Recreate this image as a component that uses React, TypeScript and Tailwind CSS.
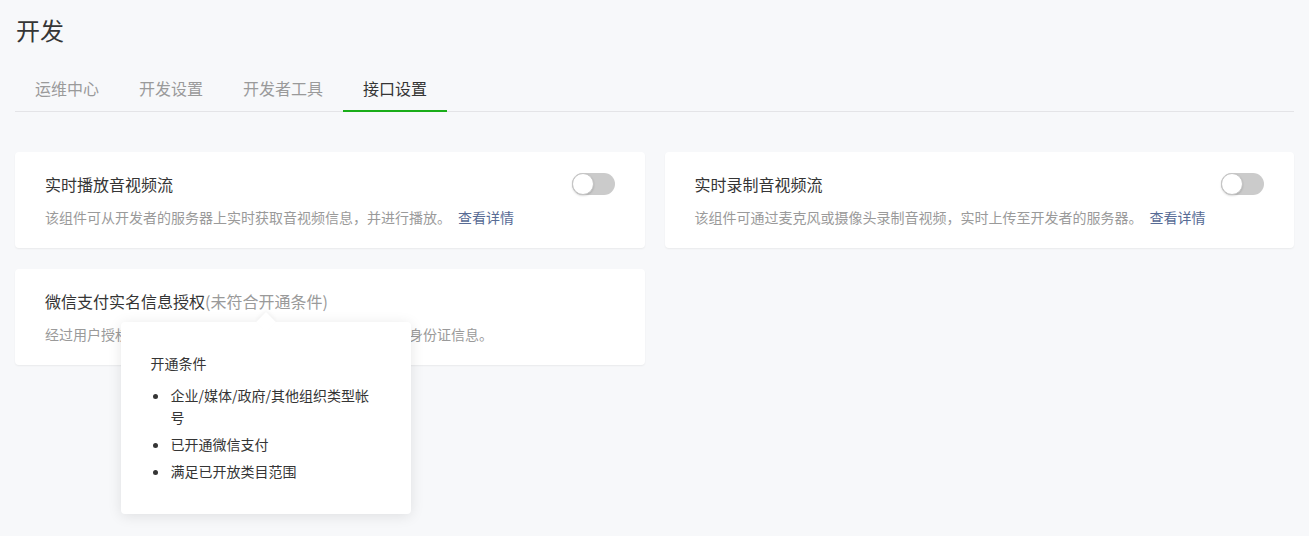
import React from 'react';

const font = { fontFamily: '"Noto Sans CJK SC", "Noto Sans", sans-serif' };

const tabs = ['运维中心', '开发设置', '开发者工具', '接口设置'];

function Toggle() {
  return (
    <div className="relative h-[22px] w-[43px] shrink-0 rounded-full bg-[#cbcbcb]">
      <div className="absolute left-0 top-0 h-[22px] w-[22px] rounded-full border border-[#c4c4c4] bg-white shadow-[0_1px_2px_rgba(0,0,0,0.15)]" />
    </div>
  );
}

function Card({ title, desc, link }: { title: string; desc: string; link: string }) {
  return (
    <div className="rounded bg-white px-[30px] py-5 shadow-[0_1px_2px_rgba(0,0,0,0.06)]">
      <div className="flex items-center justify-between">
        <h3 className="text-[16px] leading-6 text-[#353535]">{title}</h3>
        <Toggle />
      </div>
      <p className="mt-[10px] text-[14px] leading-[22px] text-[#9a9a9a]">
        {desc}
        <a className="ml-[7px] text-[#576b95]">{link}</a>
      </p>
    </div>
  );
}

export default function App() {
  return (
    <div className="min-h-[536px] bg-[#f7f8fa] px-[15px] pt-[14px]" style={font}>
      <h1 className="pl-px text-[24px] leading-8 text-[#353535]">开发</h1>

      <div className="mt-[30px] flex border-b border-[#e4e4e7]">
        {tabs.map((t, i) => (
          <div
            key={t}
            className={
              i === 3
                ? 'mb-[-1px] border-b-2 border-[#1aad19] px-5 pb-[9px] text-[16px] leading-6 text-[#353535]'
                : 'px-5 pb-[11px] text-[16px] leading-6 text-[#9a9a9a]'
            }
          >
            {t}
          </div>
        ))}
      </div>

      <div className="mt-[40px] grid grid-cols-2 gap-x-5 gap-y-[21px]">
        <Card
          title="实时播放音视频流"
          desc="该组件可从开发者的服务器上实时获取音视频信息，并进行播放。"
          link="查看详情"
        />
        <Card
          title="实时录制音视频流"
          desc="该组件可通过麦克风或摄像头录制音视频，实时上传至开发者的服务器。"
          link="查看详情"
        />
        <div className="rounded bg-white px-[30px] py-5 shadow-[0_1px_2px_rgba(0,0,0,0.06)]">
          <h3 className="text-[16px] leading-6 text-[#353535]">
            微信支付实名信息授权
            <span className="relative text-[#9a9a9a]">
              (未符合开通条件)
              <div className="absolute left-1/2 top-[calc(100%+9px)] z-10 w-[290px] -translate-x-1/2 rounded bg-white pb-[32px] pl-[29px] pr-[31px] pt-[30px] text-[14px] leading-[22px] text-[#353535] shadow-[0_2px_14px_rgba(0,0,0,0.1)]">
                <div className="absolute left-1/2 top-[-7px] h-[14px] w-[14px] -translate-x-1/2 rotate-45 bg-white shadow-[-2px_-2px_4px_rgba(0,0,0,0.04)]" />
                <p className="relative">开通条件</p>
                <ul className="relative mt-[10px] w-[228px] list-disc pl-5">
                  <li className="mb-[5px]">企业/媒体/政府/其他组织类型帐号</li>
                  <li className="mb-[5px]">已开通微信支付</li>
                  <li>满足已开放类目范围</li>
                </ul>
              </div>
            </span>
          </h3>
          <p className="mt-[10px] text-[14px] leading-[22px] text-[#9a9a9a]">
            经过用户授权，开发者可以获取用户在微信支付中的姓名、身份证信息。
          </p>
        </div>
      </div>
    </div>
  );
}
